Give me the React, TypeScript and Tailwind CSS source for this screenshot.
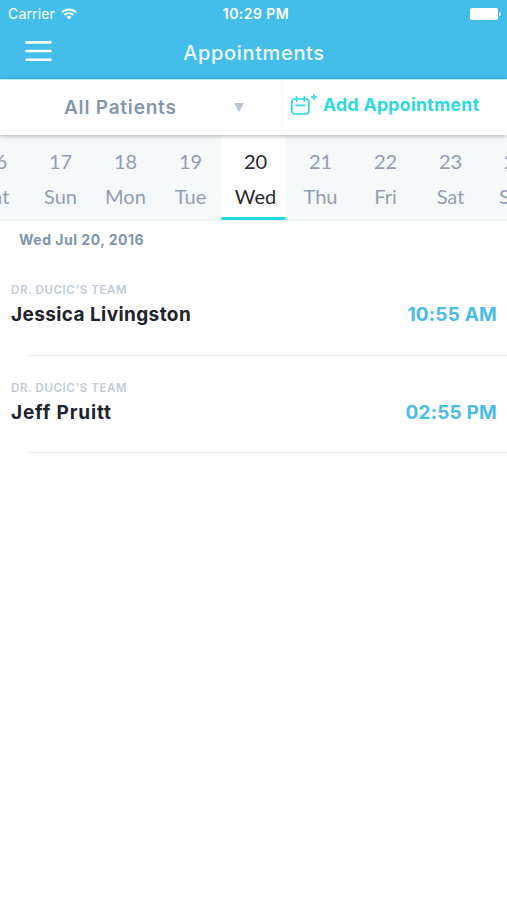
import React from "react";

type Day = { date: string; name: string; selected?: boolean };

const days: Day[] = [
  { date: "16", name: "Sat" },
  { date: "17", name: "Sun" },
  { date: "18", name: "Mon" },
  { date: "19", name: "Tue" },
  { date: "20", name: "Wed", selected: true },
  { date: "21", name: "Thu" },
  { date: "22", name: "Fri" },
  { date: "23", name: "Sat" },
  { date: "24", name: "Sun" },
];

const appointments = [
  { team: "DR. DUCIC'S TEAM", patient: "Jessica Livingston", time: "10:55 AM", tracking: "tracking-[0.4px]" },
  { team: "DR. DUCIC'S TEAM", patient: "Jeff Pruitt", time: "02:55 PM", tracking: "tracking-[0.85px]" },
];

function StatusBar() {
  return (
    <div className="grid h-7 grid-cols-3 items-center pl-2 pr-[6px] text-white">
      <div className="flex items-center gap-[6px]">
        <span className="text-[14px] leading-none tracking-[0.15px]">Carrier</span>
        <svg className="h-[12px] w-[16px]" viewBox="0 0 16 12" fill="none" stroke="currentColor" strokeWidth="1.9">
          <path d="M1 4.3a10 10 0 0 1 14 0" />
          <path d="M3.5 7a6.4 6.4 0 0 1 9 0" />
          <path d="M8 11.6 5.4 9a3.7 3.7 0 0 1 5.2 0z" fill="currentColor" stroke="none" />
        </svg>
      </div>
      <span className="whitespace-nowrap pl-[3px] text-center text-[14px] font-semibold leading-none tracking-[0.45px]">10:29 PM</span>
      <div className="flex items-center justify-end gap-px">
        <span className="h-[12px] w-[28px] rounded-[2px] bg-white" />
        <span className="h-[4px] w-[2px] rounded-r-full bg-white/80" />
      </div>
    </div>
  );
}

function CalendarPlus() {
  return (
    <svg className="h-[24px] w-[28px] shrink-0" viewBox="0 0 28 24" fill="none" stroke="#2bd9de" strokeWidth="1.7" strokeLinecap="round">
      <rect x="1.8" y="6" width="17" height="15" rx="3" />
      <path d="M6.5 3.7v4.4M14.3 3.7v4.4M6 12.3h8.8" />
      <path d="M24 1v6M21 4h6" strokeLinecap="butt" />
    </svg>
  );
}

export default function App() {
  return (
    <main className="flex h-[900px] w-[507px] flex-col overflow-hidden bg-white font-[Inter,sans-serif]">
      <header className="h-[79px] shrink-0 bg-[#43beea]">
        <StatusBar />
        <div className="grid h-[50px] grid-cols-[80px_1fr_80px] items-center">
          <button aria-label="Menu" className="ml-[25px] w-[27px] pb-[4px]">
            <svg className="block h-[22px] w-[27px]" viewBox="0 0 27 22" stroke="#fff" strokeWidth="2.6" strokeLinecap="round">
              <path d="M1.5 2.4h24M1.5 11h24M1.5 19.7h24" />
            </svg>
          </button>
          <h1 className="pl-[1px] text-center text-[20px] font-medium leading-none tracking-[0.65px] text-[#eefaff]">Appointments</h1>
        </div>
      </header>

      <section className="z-10 flex h-[56px] shrink-0 items-stretch border-t border-[#bfecfa] bg-white shadow-[0_1px_5px_rgba(0,0,0,0.3)]">
        <button className="flex w-[282px] items-center pl-[64px]">
          <span className="w-[170px] text-left text-[19px] font-semibold leading-none tracking-[0.8px] text-[#8496ae]">All Patients</span>
          <svg className="h-[9px] w-[10px]" viewBox="0 0 10 9" fill="#b9c4d3">
            <path d="M0 0h10L5 9z" />
          </svg>
        </button>
        <button className="flex flex-1 items-center border-l border-[#f7f8f8] pb-[5px] pl-[7px]">
          <CalendarPlus />
          <span className="ml-[5px] whitespace-nowrap text-[17.5px] font-bold leading-none tracking-[0.4px] text-[#2bd9de]">Add Appointment</span>
        </button>
      </section>

      <nav className="h-[86px] shrink-0 overflow-hidden bg-[#f6f9fa] font-[Lato,sans-serif]">
        <div className="-ml-[39px] flex h-full w-[585px]">
          {days.map((day) => (
            <div
              key={day.date}
              className={
                day.selected
                  ? "flex w-[65px] shrink-0 flex-col items-center border-b border-[#eef0f1] bg-white text-[20px] leading-6 text-[#25282d]"
                  : "flex w-[65px] shrink-0 flex-col items-center border-b-2 border-[#eef0f1] text-[20px] leading-6 text-[#929db4]"
              }
            >
              <span className="pl-[4px] pt-[14px]">{day.date}</span>
              <span className="mt-[11px] pl-[4px]">{day.name}</span>
              {day.selected && <span className="mt-auto h-[3px] w-full rounded-full bg-[#20dce2]" />}
            </div>
          ))}
        </div>
      </nav>

      <section>
        <h2 className="h-[37px] pl-[19px] pt-[9px] text-[14px] font-bold leading-[19px] tracking-[0.5px] text-[#8294ad]">Wed Jul 20, 2016</h2>
        {appointments.map((item) => (
          <article key={item.patient} className="flex h-[97.5px] flex-col">
            <div className="flex flex-1 items-start justify-between pl-[11px] pr-[10px] pt-[25px]">
              <div>
                <p className="text-[11.5px] font-semibold leading-[15px] tracking-[0.6px] text-[#c1cad6]">{item.team}</p>
                <h3 className={`mt-[5px] text-[19px] font-bold leading-6 text-[#20232d] ${item.tracking}`}>{item.patient}</h3>
              </div>
              <p className="mt-[20px] text-[19px] font-bold leading-6 tracking-[0.2px] text-[#49bce6]">{item.time}</p>
            </div>
            <div className="ml-[26px] h-px bg-[#e9ebec]" />
          </article>
        ))}
      </section>
    </main>
  );
}
